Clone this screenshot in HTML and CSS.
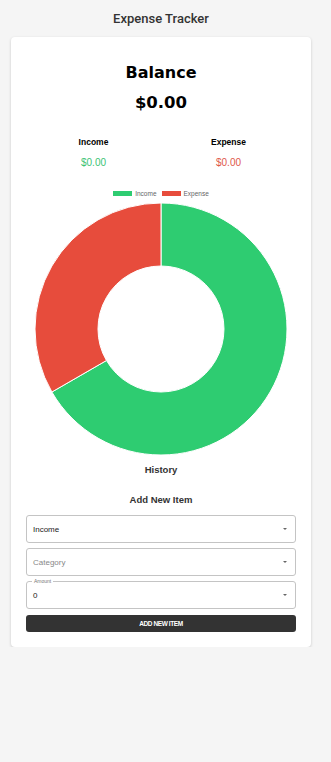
FILE: index.html
```html
<!DOCTYPE html>
<html>
<head>
<meta charset="utf-8">
<link rel="stylesheet" href="styles.css">
</head>
<body>
<div class="page">
<div class="title">Expense Tracker</div>
<div class="card">
  <h2 class="balance-label">Balance</h2>
  <div class="balance-value">$0.00</div>
  <div class="totals">
    <div class="col">
      <div class="col-label">Income</div>
      <div class="col-value income">$0.00</div>
    </div>
    <div class="col">
      <div class="col-label">Expense</div>
      <div class="col-value expense">$0.00</div>
    </div>
  </div>
  <div class="legend">
    <span class="swatch green"></span><span class="legend-text">Income</span>
    <span class="swatch red"></span><span class="legend-text">Expense</span>
  </div>
  <div class="chart">
    <svg width="270" height="254" viewBox="0 0 270 254">
      <path d="M135 1 A126 126 0 1 1 25.88 190 L80.44 158.5 A63 63 0 1 0 135 64 Z" fill="#2ecc71" stroke="#fff" stroke-width="1"/>
      <path d="M25.88 190 A126 126 0 0 1 135 1 L135 64 A63 63 0 0 0 80.44 158.5 Z" fill="#e74c3c" stroke="#fff" stroke-width="1"/>
    </svg>
  </div>
  <div class="history">History</div>
  <div class="add-title">Add New Item</div>
  <div class="field"><span class="field-text">Income</span><span class="arrow"></span></div>
  <div class="field"><span class="field-text placeholder">Category</span><span class="arrow"></span></div>
  <div class="field"><span class="notch">Amount</span><span class="field-text">0</span><span class="arrow"></span></div>
  <button class="add-btn">ADD NEW ITEM</button>
</div>
</div>
</body>
</html>
```
FILE: styles.css
```css
html, body {
  margin: 0;
  padding: 0;
  background: #f5f5f5;
}
body {
  font-family: "Liberation Sans", Arial, sans-serif;
  color: #333;
}
.page {
  width: 300px;
  margin-left: 11px;
}
.title {
  height: 37px;
  line-height: 37px;
  text-align: center;
  font-family: Roboto, "Liberation Sans", sans-serif;
  font-weight: 500;
  font-size: 13px;
  color: #333;
}
.card {
  width: 300px;
  box-sizing: border-box;
  background: #fff;
  border-radius: 4px;
  box-shadow: 0 1px 3px rgba(0,0,0,0.18);
  padding: 25px 15px 15px;
}
.balance-label {
  margin: 0;
  text-align: center;
  font-family: "DejaVu Sans", sans-serif;
  font-weight: bold;
  font-size: 16px;
  line-height: 22px;
  color: #000;
}
.balance-value {
  margin-top: 7px;
  text-align: center;
  font-family: "DejaVu Sans", sans-serif;
  font-weight: bold;
  font-size: 16.5px;
  line-height: 24px;
  color: #000;
}
.totals {
  display: flex;
  margin-top: 21px;
}
.col {
  flex: 1;
  text-align: center;
}
.col-label {
  font-size: 8.5px;
  font-weight: bold;
  line-height: 12px;
  color: #000;
}
.col-value {
  margin-top: 9px;
  font-size: 10px;
  line-height: 12px;
}
.income { color: #3cc374; }
.expense { color: #e0584a; }
.legend {
  margin-top: 19px;
  height: 10px;
  display: flex;
  align-items: center;
  justify-content: center;
}
.swatch {
  display: inline-block;
  width: 19px;
  height: 5px;
}
.swatch.green { background: #2ecc71; }
.swatch.red { background: #e74c3c; margin-left: 5px; }
.legend-text {
  font-size: 6.5px;
  color: #666;
  margin-left: 3px;
}
.chart {
  margin-top: 4px;
  height: 254px;
  display: flex;
  justify-content: center;
}
.chart svg { display: block; }
.history {
  margin-top: 7px;
  text-align: center;
  font-weight: bold;
  font-size: 9.5px;
  line-height: 14px;
  color: #333;
}
.add-title {
  margin-top: 16px;
  text-align: center;
  font-weight: bold;
  font-size: 9.5px;
  line-height: 14px;
  color: #333;
  margin-bottom: 8px;
}
.field {
  position: relative;
  height: 28px;
  box-sizing: border-box;
  border: 1px solid #c4c4c4;
  border-radius: 3px;
  display: flex;
  align-items: center;
  padding: 0 8px 0 6px;
  margin-bottom: 5px;
}
.field-text {
  flex: 1;
  font-family: "Liberation Sans", Arial, sans-serif;
  font-size: 8px;
  color: #222;
}
.field-text.placeholder { color: #888; }
.arrow {
  width: 0;
  height: 0;
  border-left: 2.5px solid transparent;
  border-right: 2.5px solid transparent;
  border-top: 2.5px solid #666;
}
.notch {
  position: absolute;
  top: -4px;
  left: 5px;
  padding: 0 2px;
  background: #fff;
  font-family: "Liberation Sans", Arial, sans-serif;
  font-size: 5px;
  line-height: 7px;
  color: #777;
}
.add-btn {
  display: block;
  width: 100%;
  height: 17px;
  margin-top: 6px;
  border: none;
  border-radius: 3px;
  background: #333;
  color: #fff;
  font-family: "Liberation Sans", Arial, sans-serif;
  font-weight: bold;
  font-size: 6.5px;
  letter-spacing: -0.4px;
  padding: 0;
}
```
